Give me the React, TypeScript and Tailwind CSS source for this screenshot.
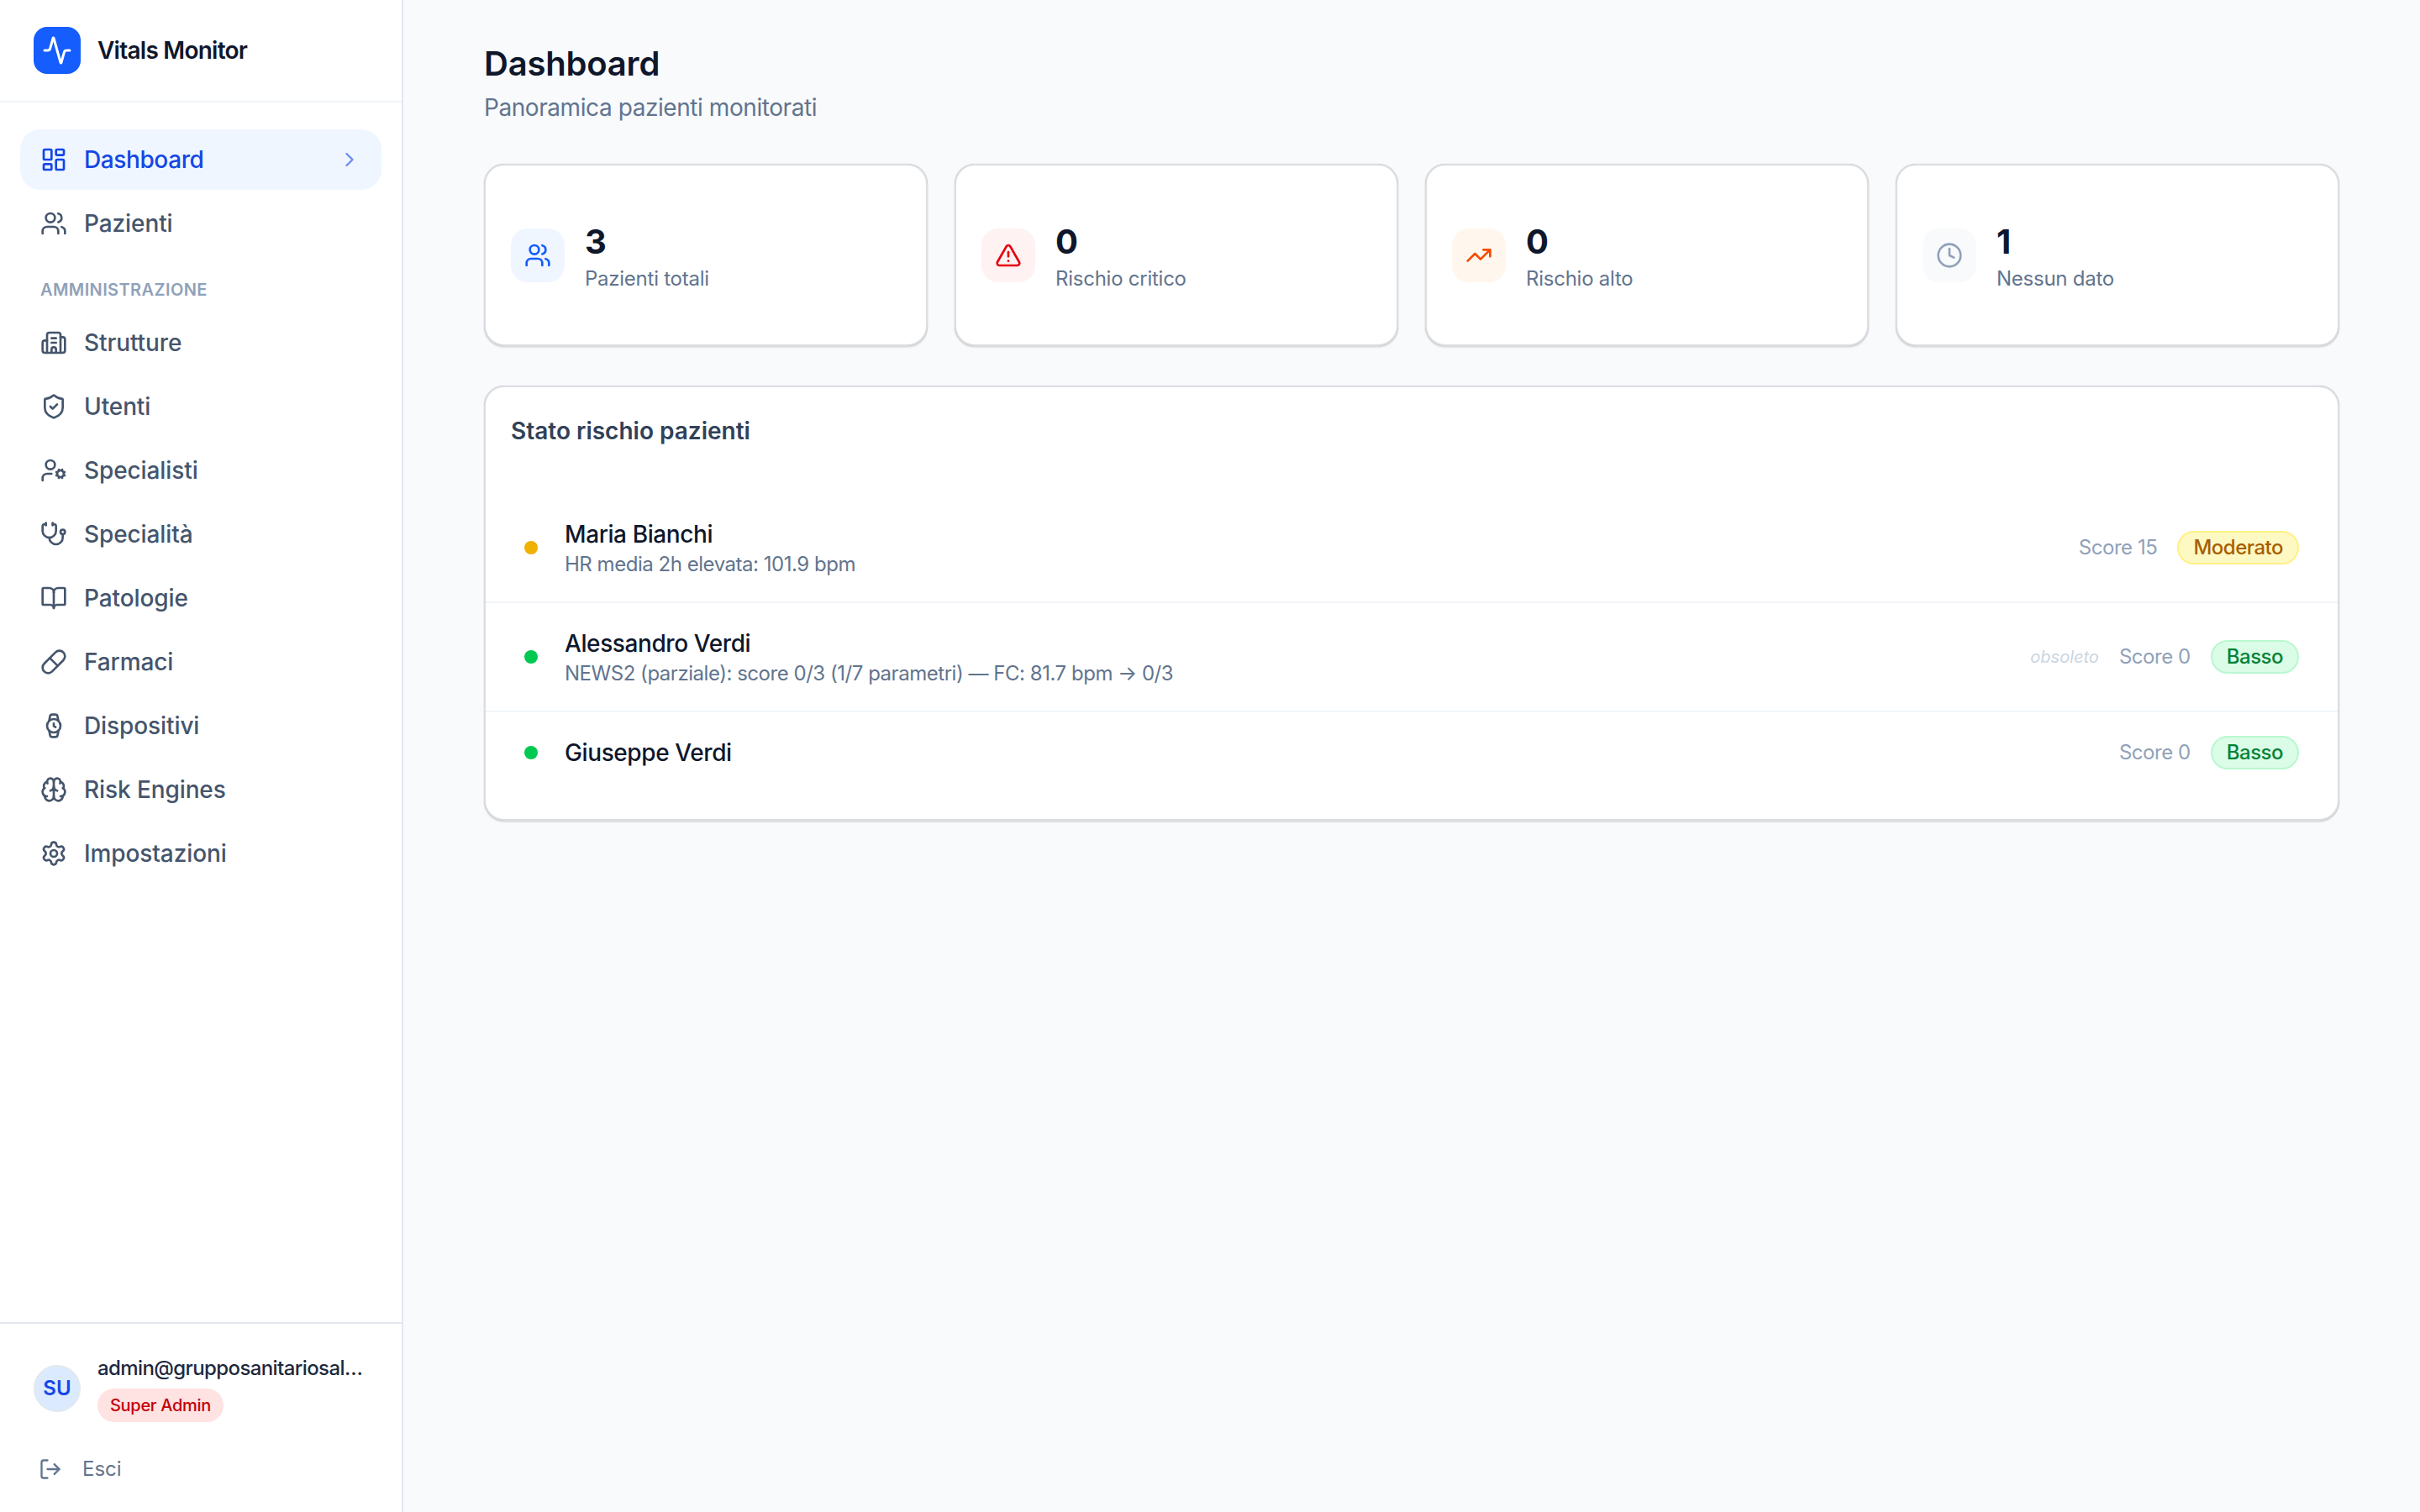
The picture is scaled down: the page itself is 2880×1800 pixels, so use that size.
import React from "react";
import {
  Activity, LayoutDashboard, ChevronRight, Users, Building2, ShieldCheck, UserCog, Stethoscope,
  BookOpen, Pill, Watch, Brain, Settings, LogOut, TriangleAlert, TrendingUp, Clock,
} from "lucide-react";

const adminItems = [
  { label: "Strutture", icon: Building2 },
  { label: "Utenti", icon: ShieldCheck },
  { label: "Specialisti", icon: UserCog },
  { label: "Specialità", icon: Stethoscope },
  { label: "Patologie", icon: BookOpen },
  { label: "Farmaci", icon: Pill },
  { label: "Dispositivi", icon: Watch },
  { label: "Risk Engines", icon: Brain },
  { label: "Impostazioni", icon: Settings },
];

function NavItem({ label, icon: Icon, active }: { label: string; icon: React.ElementType; active?: boolean }) {
  return (
    <a
      className={
        active
          ? "flex h-[72px] items-center gap-5 rounded-3xl bg-blue-50 px-6 text-[28px] font-medium tracking-[-0.4px] text-blue-700"
          : "flex h-[72px] items-center gap-5 rounded-3xl px-6 text-[28px] font-medium tracking-[-0.1px] text-slate-600"
      }
    >
      <Icon size={32} strokeWidth={2} className="shrink-0" />
      <span className="flex-1">{label}</span>
      {active && <ChevronRight size={28} strokeWidth={2} className="shrink-0 opacity-60" />}
    </a>
  );
}

function Sidebar() {
  return (
    <aside className="flex h-full w-[480px] shrink-0 flex-col border-r-2 border-slate-200 bg-white">
      <div className="flex h-[122px] items-center gap-5 border-b-2 border-slate-100 px-10">
        <div className="flex size-14 items-center justify-center rounded-2xl bg-blue-600 text-white">
          <Activity size={36} strokeWidth={2} />
        </div>
        <span className="text-[28px] font-semibold tracking-[-0.75px] text-slate-900">Vitals Monitor</span>
      </div>
      <nav className="flex flex-1 flex-col gap-1 px-6 pt-8">
        <NavItem label="Dashboard" icon={LayoutDashboard} active />
        <NavItem label="Pazienti" icon={Users} />
        <div className="px-6 pt-[23px] pb-[7px] text-[20px] leading-8 font-semibold tracking-[0.4px] text-slate-400">
          AMMINISTRAZIONE
        </div>
        {adminItems.map((i) => (
          <NavItem key={i.label} label={i.label} icon={i.icon} />
        ))}
      </nav>
      <div className="h-[226px] border-t-2 border-slate-200 px-10 pt-[37px]">
        <div className="flex items-center gap-5">
          <div className="flex size-14 shrink-0 items-center justify-center rounded-full border-2 border-slate-200 bg-blue-100 text-2xl font-semibold text-blue-700">
            SU
          </div>
          <div className="flex min-w-0 flex-1 flex-col items-start gap-2">
            <div className="text-2xl leading-8 font-medium tracking-[-0.6px] whitespace-nowrap text-slate-800">admin@grupposanitariosal…</div>
            <span className="inline-flex h-10 items-center rounded-full bg-red-100 px-[15px] text-[20px] font-medium tracking-[-0.3px] text-red-700">
              Super Admin
            </span>
          </div>
        </div>
        <div className="mt-10 flex items-center gap-6 pl-[6px] text-2xl text-slate-500">
          <LogOut size={28} strokeWidth={2} />
          <span>Esci</span>
        </div>
      </div>
    </aside>
  );
}

const stats = [
  { value: "3", label: "Pazienti totali", icon: Users, box: "bg-blue-50", color: "text-blue-600" },
  { value: "0", label: "Rischio critico", icon: TriangleAlert, box: "bg-red-50", color: "text-red-600" },
  { value: "0", label: "Rischio alto", icon: TrendingUp, box: "bg-orange-50", color: "text-orange-600" },
  { value: "1", label: "Nessun dato", icon: Clock, box: "bg-slate-50", color: "text-slate-400" },
];

function StatCard({ value, label, icon: Icon, box, color }: (typeof stats)[number]) {
  return (
    <div className="flex h-[217px] items-center gap-6 rounded-3xl border-2 border-[#dcdee2] bg-white px-[30px] shadow-[0_0_1px_0_rgb(0_0_0/0.3),0_2px_2px_0_rgb(0_0_0/0.1)]">
      <div className={`flex size-16 shrink-0 items-center justify-center rounded-[20px] ${box} ${color}`}>
        <Icon size={32} strokeWidth={2} />
      </div>
      <div>
        <div className="text-[40px] leading-14 font-bold text-slate-900">{value}</div>
        <div className="text-2xl leading-8 tracking-[-0.25px] text-slate-500">{label}</div>
      </div>
    </div>
  );
}

const rows = [
  { name: "Maria Bianchi", sub: "HR media 2h elevata: 101.9 bpm", score: "Score 15", level: "Moderato", dot: "bg-yellow-500", badge: "border-yellow-200 bg-yellow-100 text-yellow-700" },
  { name: "Alessandro Verdi", sub: "NEWS2 (parziale): score 0/3 (1/7 parametri) — FC: 81.7 bpm → 0/3", score: "Score 0", level: "Basso", dot: "bg-green-500", badge: "border-green-200 bg-green-100 text-green-700", stale: true },
  { name: "Giuseppe Verdi", score: "Score 0", level: "Basso", dot: "bg-green-500", badge: "border-green-200 bg-green-100 text-green-700" },
];

export default function App() {
  return (
    <div className="flex h-[1800px] w-[2880px] overflow-hidden bg-slate-50 font-['Inter',sans-serif]">
      <Sidebar />
      <main className="flex-1 px-24 pt-12">
        <h1 className="text-[40px] leading-14 font-semibold tracking-[-0.2px] text-slate-900">Dashboard</h1>
        <p className="mt-1 text-[28px] leading-10 tracking-[-0.43px] text-slate-500">Panoramica pazienti monitorati</p>
        <div className="mt-[47px] grid grid-cols-4 gap-8">
          {stats.map((s) => (
            <StatCard key={s.label} {...s} />
          ))}
        </div>
        <section className="mt-[47px] rounded-3xl border-2 border-[#dcdee2] bg-white pb-[31px] shadow-[0_0_1px_0_rgb(0_0_0/0.3),0_2px_2px_0_rgb(0_0_0/0.1)]">
          <h2 className="px-[30px] pt-8 pb-[55px] text-[28px] leading-10 font-semibold text-slate-700">Stato rischio pazienti</h2>
          <div className="divide-y-2 divide-slate-100">
            {rows.map((r) => (
              <div key={r.name} className="flex items-center gap-8 px-[46px] py-7">
                <span className={`size-4 shrink-0 rounded-full ${r.dot}`} />
                <div className="min-w-0 flex-1">
                  <div className="text-[28px] leading-10 font-medium tracking-[-0.4px] text-slate-900">{r.name}</div>
                  {r.sub && <div className="text-2xl leading-8 tracking-[-0.47px] text-slate-500">{r.sub}</div>}
                </div>
                <div className="flex items-center gap-6">
                  {r.stale && <span className="text-[20px] text-slate-300 italic">obsoleto</span>}
                  <span className="text-2xl tracking-[-0.45px] text-slate-400">{r.score}</span>
                  <span className={`flex h-10 items-center rounded-full border-2 px-[17px] text-2xl font-medium tracking-[-0.5px] ${r.badge}`}>{r.level}</span>
                </div>
              </div>
            ))}
          </div>
        </section>
      </main>
    </div>
  );
}
